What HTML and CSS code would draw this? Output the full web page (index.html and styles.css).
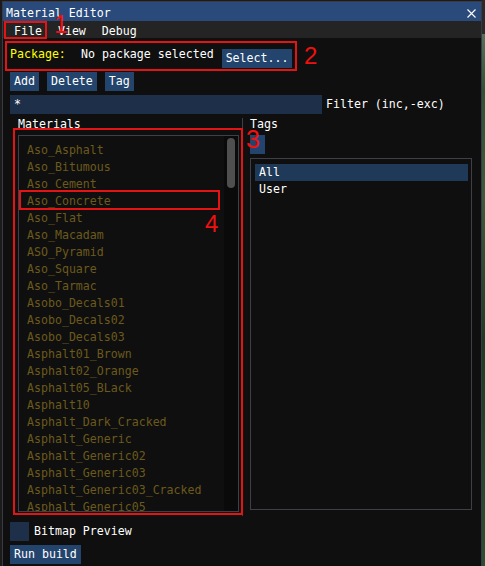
FILE: index.html
```html
<!DOCTYPE html>
<html>
<head>
<meta charset="utf-8">
<link rel="stylesheet" href="styles.css">
</head>
<body>
<div class="screen">
  <div class="window">
    <div class="titlebar">
      <span class="title">Material Editor</span>
      <svg class="close" width="9" height="9" viewBox="0 0 9 9"><path d="M0.5 0.5 L8.5 8.5 M8.5 0.5 L0.5 8.5" stroke="#ffffff" stroke-width="1.1" fill="none"/></svg>
    </div>
    <div class="menubar">
      <span class="menu-item">File</span>
      <span class="menu-item">View</span>
      <span class="menu-item">Debug</span>
    </div>
    <div class="content">
      <div class="package-row">
        <span class="pkg-label">Package:</span>
        <span class="pkg-value">No package selected</span>
        <button class="btn btn-select">Select...</button>
      </div>
      <div class="btn-row">
        <button class="btn">Add</button>
        <button class="btn">Delete</button>
        <button class="btn">Tag</button>
      </div>
      <div class="filter-row">
        <div class="input">*</div>
        <span class="filter-label">Filter (inc,-exc)</span>
      </div>
      <div class="columns">
        <div class="col col-materials">
          <div class="col-title">Materials</div>
          <div class="listbox materials-box">
            <div class="items">
              <div class="item">Aso_Asphalt</div>
              <div class="item">Aso_Bitumous</div>
              <div class="item">Aso_Cement</div>
              <div class="item">Aso_Concrete</div>
              <div class="item">Aso_Flat</div>
              <div class="item">Aso_Macadam</div>
              <div class="item">ASO_Pyramid</div>
              <div class="item">Aso_Square</div>
              <div class="item">Aso_Tarmac</div>
              <div class="item">Asobo_Decals01</div>
              <div class="item">Asobo_Decals02</div>
              <div class="item">Asobo_Decals03</div>
              <div class="item">Asphalt01_Brown</div>
              <div class="item">Asphalt02_Orange</div>
              <div class="item">Asphalt05_BLack</div>
              <div class="item">Asphalt10</div>
              <div class="item">Asphalt_Dark_Cracked</div>
              <div class="item">Asphalt_Generic</div>
              <div class="item">Asphalt_Generic02</div>
              <div class="item">Asphalt_Generic03</div>
              <div class="item">Asphalt_Generic03_Cracked</div>
              <div class="item">Asphalt_Generic05</div>
            </div>
            <div class="scrollbar"><div class="grab"></div></div>
          </div>
        </div>
        <div class="col col-tags">
          <div class="col-title">Tags</div>
          <button class="btn btn-small"></button>
          <div class="listbox tags-box">
            <div class="tag selected">All</div>
            <div class="tag">User</div>
          </div>
        </div>
      </div>
      <div class="check-row">
        <span class="checkbox"></span>
        <span class="check-label">Bitmap Preview</span>
      </div>
      <button class="btn btn-run">Run build</button>
    </div>
  </div>
  <div class="backdrop"></div>

  <div class="annot box1"></div>
  <div class="annot box2"></div>
  <div class="annot box3"></div>
  <div class="annot box4"></div>
  <span class="num num1">1</span>
  <span class="num num2">2</span>
  <span class="num num3">3</span>
  <span class="num num4">4</span>
</div>
</body>
</html>
```

FILE: styles.css
```css
* { box-sizing: border-box; }
html, body { margin: 0; padding: 0; }
body {
  width: 485px;
  height: 566px;
  overflow: hidden;
  background: #1b1b1b;
  font-family: "DejaVu Sans Mono", "Liberation Mono", monospace;
  font-size: 11.6px;
  line-height: 13px;
  color: #ffffff;
}
.screen {
  position: relative;
  display: flex;
  height: 566px;
}
.window {
  width: 480px;
  height: 565px;
  margin: 1px 0 0 2px;
  border: 1px solid #3a3a42;
  border-bottom: none;
  background: #0f0f0f;
  display: flex;
  flex-direction: column;
}
.backdrop {
  flex: 1;
  background: linear-gradient(to bottom, #2a2a2a 0, #2a2a2a 34px, #56705a 34px, #2f5236 90px, #3d5a3e 200px, #1f3b25 340px, #2c4f33 566px);
}
.titlebar {
  height: 19px;
  background: #294a7a;
  display: flex;
  align-items: flex-start;
  padding: 5px 0 0 3px;
}
.title { white-space: pre; }
.close { margin: 2px 5px 0 auto; }
.menubar {
  height: 17px;
  background: #242424;
  display: flex;
  gap: 16px;
  padding: 4px 0 0 11px;
}
.content {
  flex: 1;
  display: flex;
  flex-direction: column;
  padding: 10px 7px 0 7px;
}
.package-row {
  display: flex;
  align-items: flex-start;
  height: 20px;
}
.pkg-label { color: #ffff00; width: 56px; }
.pkg-value { margin-left: 15px; white-space: pre; }
.btn {
  font: inherit;
  line-height: 13px;
  color: #ffffff;
  background: #23456d;
  border: none;
  border-radius: 0;
  height: 19px;
  padding: 3px 4px;
  margin: 0;
  white-space: pre;
}
.btn-select { margin-left: 8px; margin-top: 1px; }
.btn-row {
  display: flex;
  gap: 8px;
  margin-top: 4px;
}
.filter-row {
  display: flex;
  align-items: center;
  margin-top: 4px;
  height: 19px;
}
.input {
  width: 312px;
  height: 19px;
  background: #1d2f49;
  padding: 3px 4px;
}
.filter-label { margin-left: 4px; white-space: pre; }
.columns {
  display: flex;
  margin-top: 4px;
  height: 398px;
}
.col { display: flex; flex-direction: column; }
.col-materials {
  width: 232px;
  padding: 0 3px 0 8px;
}
.col-tags {
  flex: 1;
  border-left: 1px solid #3f3f48;
  padding-left: 7px;
  align-items: flex-start;
}
.col-title { height: 13px; }
.listbox {
  border: 1px solid #3f3f48;
  margin-top: 4px;
}
.materials-box {
  height: 377px;
  width: 221px;
  display: flex;
  overflow: hidden;
}
.items {
  flex: 1;
  display: flex;
  flex-direction: column;
  gap: 4px;
  padding: 8px 0 0 8px;
  overflow: hidden;
}
.item {
  height: 13px;
  flex: none;
  color: #6c5a1c;
  white-space: pre;
}
.scrollbar {
  width: 14px;
  background: #0a0a0a;
  padding: 2px 3px;
}
.grab {
  height: 50px;
  background: #4f4f4f;
  border-radius: 4px;
}
.btn-small {
  width: 15px;
  margin-top: 4px;
}
.tags-box {
  width: 222px;
  height: 352px;
  padding: 5px 3px 0 4px;
}
.tag {
  height: 17px;
  padding: 2px 4px;
}
.tag.selected { background: #1f3958; }
.check-row {
  display: flex;
  align-items: center;
  gap: 5px;
  margin-top: 6px;
  height: 19px;
}
.checkbox {
  width: 19px;
  height: 19px;
  background: #1d2f49;
}
.check-label { white-space: pre; }
.btn-run {
  align-self: flex-start;
  margin-top: 4px;
}
.annot {
  position: absolute;
  border: 2px solid #e51414;
}
.box1 { left: 4px; top: 21px; width: 43px; height: 18px; }
.box2 { left: 5px; top: 41px; width: 292px; height: 30px; }
.box3 { left: 13px; top: 128px; width: 230px; height: 387px; }
.box4 { left: 19px; top: 190px; width: 201px; height: 20px; }
.num {
  position: absolute;
  color: #f01010;
  font-family: "Liberation Sans", Arial, sans-serif;
  font-size: 25px;
  line-height: 25px;
}
.num1 { left: 54px; top: 12px; }
.num2 { left: 304px; top: 43px; font-size: 24px; }
.num3 { left: 246px; top: 127px; }
.num4 { left: 205px; top: 211px; font-size: 24px; }
```
